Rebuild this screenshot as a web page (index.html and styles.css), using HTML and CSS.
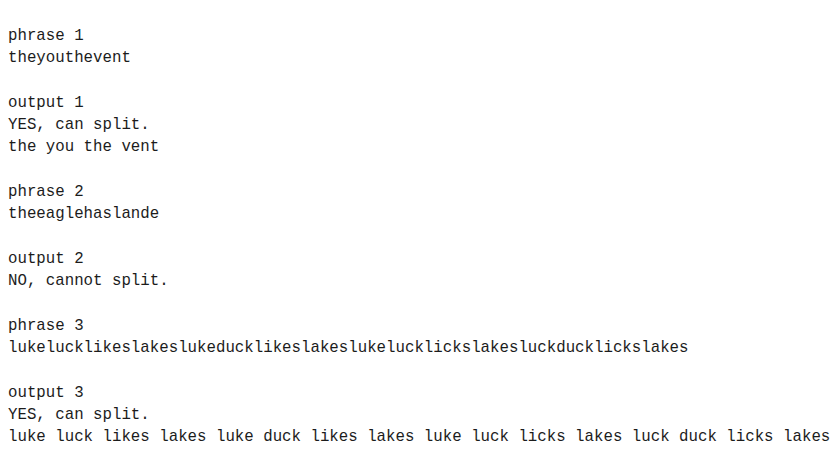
FILE: index.html
```html
<!DOCTYPE html>
<html>
<head>
<meta charset="utf-8">
<link rel="stylesheet" href="styles.css">
</head>
<body>
<pre class="out">phrase 1
theyouthevent

output 1
YES, can split.
the you the vent

phrase 2
theeaglehaslande

output 2
NO, cannot split.

phrase 3
lukelucklikeslakeslukeducklikeslakeslukelucklickslakesluckducklickslakes

output 3
YES, can split.
luke luck likes lakes luke duck likes lakes luke luck licks lakes luck duck licks lakes</pre>
</body>
</html>
```
FILE: styles.css
```css
html, body {
  background: #ffffff;
}
body {
  margin: 0;
  padding: 25px 0 0 8px;
}
.out {
  margin: 0;
  font-family: "Liberation Mono", "DejaVu Sans Mono", monospace;
  font-size: 15.75px;
  line-height: 22.28px;
  color: #1c1c1c;
}
```
